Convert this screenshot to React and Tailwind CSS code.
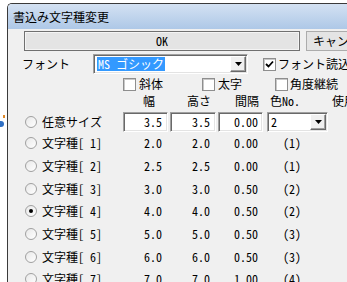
import React from 'react';

const jp = { fontFamily: '"Noto Sans Mono CJK JP", "Noto Sans CJK JP", "Noto Sans", monospace' };

const sunken =
  'border border-t-[#a0a0a0] border-l-[#a0a0a0] border-r-white border-b-white shadow-[inset_1px_1px_0_#696969,inset_-1px_-1px_0_#e3e3e3] bg-white';

const Radio = ({ on }) => (
  <span className="w-[12px] h-[12px] rounded-full border border-[#a0a0a0] bg-gradient-to-br from-[#e8e8e8] to-white flex items-center justify-center shrink-0">
    {on && <span className="w-[4px] h-[4px] rounded-full bg-black" />}
  </span>
);

const Check = ({ on }) => (
  <span className="w-[13px] h-[13px] border border-[#8e8e8e] bg-white flex items-center justify-center shrink-0 shadow-[inset_1px_1px_0_#c8c8c8]">
    {on && (
      <svg width="9" height="8" viewBox="0 0 9 8">
        <path d="M1 4 L3.5 6.5 L8 1.5" fill="none" stroke="#000" strokeWidth="1.8" />
      </svg>
    )}
  </span>
);

const DropBtn = () => (
  <span className="w-[16px] h-[16px] bg-[#f0f0f0] border border-t-white border-l-white border-r-[#696969] border-b-[#696969] shadow-[inset_-1px_-1px_0_#a0a0a0] flex items-center justify-center shrink-0">
    <svg width="7" height="4" viewBox="0 0 7 4">
      <path d="M0 0 H7 L3.5 4 Z" fill="#000" />
    </svg>
  </span>
);

const rows = [
  ['1', '2.0', '2.0', '0.00', '(1)', false],
  ['2', '2.5', '2.5', '0.00', '(1)', false],
  ['3', '3.0', '3.0', '0.50', '(2)', false],
  ['4', '4.0', '4.0', '0.50', '(2)', true],
  ['5', '5.0', '5.0', '0.50', '(3)', false],
  ['6', '6.0', '6.0', '0.50', '(3)', false],
  ['7', '7.0', '7.0', '1.00', '(4)', false],
];

export default function App() {
  return (
    <div className="w-[347px] h-[282px] overflow-hidden bg-white relative text-[12px] text-black leading-none" style={jp}>
      {/* bits of the desktop showing at the left edge */}
      <span className="absolute left-[3px] top-[115px] w-[2px] h-[3px] bg-[#e08a2a]" />
      <span className="absolute left-0 top-[121px] w-[4px] h-[6px] rounded-r-full bg-[#2f6fc4]" />

      <div className="ml-[7px] mt-[3px] w-[400px] h-[300px] border-l border-t border-[#3a3a3a] rounded-tl-[5px] flex flex-col overflow-hidden">
        <div className="h-[25px] bg-gradient-to-b from-[#d3e1f2] to-[#aec8e7] flex items-center pl-[5px] text-[12px] shrink-0" style={{ fontFamily: '"Noto Sans CJK JP", sans-serif' }}>
          書込み文字種変更
        </div>

        <div className="flex-1 bg-[#f0f0f0] flex flex-col pt-[2px]">
          {/* buttons */}
          <div className="flex h-[20px] shrink-0">
            <div className="ml-[16px] w-[276px] h-[20px] border border-[#707070] bg-[#e4e4e4] shadow-[inset_0_0_0_1px_#f4f4f4] flex items-center justify-center">
              OK
            </div>
            <div className="ml-[6px] w-[80px] h-[20px] border border-[#acacac] bg-[#e4e4e4] flex items-center pl-[6px]">
              キャンセル
            </div>
          </div>

          {/* font row */}
          <div className="flex items-center h-[20px] mt-[3px] shrink-0">
            <span className="ml-[14px] w-[71px]">フォント</span>
            <div className={`${sunken} w-[155px] h-[20px] flex items-center justify-between pl-[3px] pr-[1px]`}>
              <span className="bg-[#3399ff] text-white px-[1px] h-[14px] flex items-center">MS ゴシック</span>
              <DropBtn />
            </div>
            <span className="ml-[15px]"><Check on /></span>
            <span className="ml-[2px]">フォント読込</span>
          </div>

          {/* style checkboxes */}
          <div className="flex items-center h-[14px] mt-[3px] shrink-0">
            <span className="ml-[115px]"><Check /></span>
            <span className="ml-[3px]">斜体</span>
            <span className="ml-[39px]"><Check /></span>
            <span className="ml-[3px]">太字</span>
            <span className="ml-[33px]"><Check /></span>
            <span className="ml-[2px]">角度継続</span>
          </div>

          {/* headers */}
          <div className="flex items-center h-[20px] shrink-0">
            <span className="w-[147px] text-right">幅</span>
            <span className="w-[56px] text-right">高さ</span>
            <span className="w-[48px] text-right">間隔</span>
            <span className="ml-[11px]">色No.</span>
            <span className="ml-[32px]">使用</span>
          </div>

          {/* free size */}
          <div className="flex items-center h-[20px] mt-[1px] shrink-0">
            <div className="w-[115px] flex items-center pl-[17px] gap-[5px]">
              <Radio />
              <span>任意サイズ</span>
            </div>
            <div className={`${sunken} w-[45px] h-[20px] flex items-center justify-end pr-[5px]`}>3.5</div>
            <div className={`${sunken} ml-[2px] w-[46px] h-[20px] flex items-center justify-end pr-[5px]`}>3.5</div>
            <div className={`${sunken} ml-[2px] w-[45px] h-[20px] flex items-center justify-end pr-[4px]`}>0.00</div>
            <div className={`${sunken} ml-[4px] w-[61px] h-[20px] flex items-center justify-between pl-[3px] pr-[1px]`}>
              <span>2</span>
              <DropBtn />
            </div>
          </div>

          {/* presets */}
          {rows.map(([n, w, h, gap, col, on]) => (
            <div key={n} className="flex items-center h-[22.67px] shrink-0">
              <div className="w-[112px] flex items-center pl-[17px] gap-[5px]">
                <Radio on={on} />
                <span>文字種[ {n}]</span>
              </div>
              <span className="w-[42px] text-right">{w}</span>
              <span className="w-[48px] text-right">{h}</span>
              <span className="w-[48px] text-right">{gap}</span>
              <span className="ml-[25px]">{col}</span>
            </div>
          ))}
        </div>
      </div>
    </div>
  );
}
